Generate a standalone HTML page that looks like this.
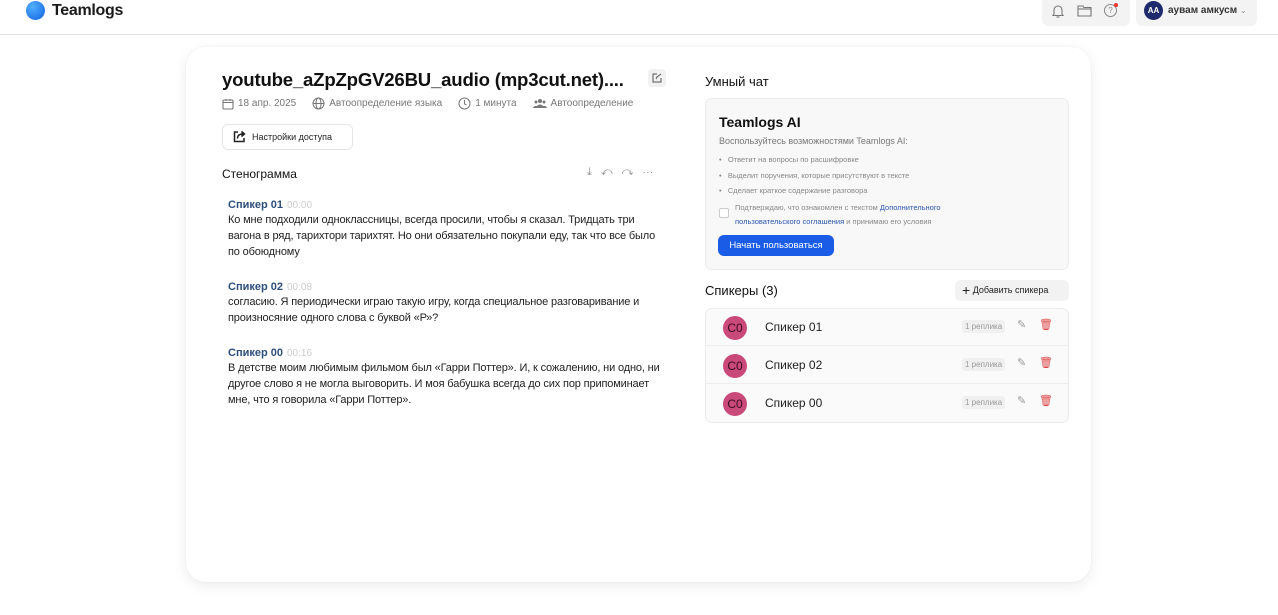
<!DOCTYPE html>
<html><head><meta charset="utf-8"><style>
*{box-sizing:border-box;margin:0;padding:0}
body{width:1278px;height:615px;background:#fff;font-family:"Liberation Sans",sans-serif;color:#1a1a1a;position:relative;overflow:hidden}
.abs{position:absolute}
.hdr{position:absolute;left:0;top:0;width:1278px;height:35px;border-bottom:1px solid #e6e6e8;background:#fff}
.card{position:absolute;left:186px;top:47px;width:905px;height:535px;background:#fff;border-radius:20px;box-shadow:0 4px 14px rgba(0,0,0,0.08),0 0 2px rgba(0,0,0,0.05)}
.meta{font-size:10px;color:#777;display:flex;align-items:center;gap:4px}
.sp{font-size:11px;font-weight:bold;color:#2d4f7c}
.tm{font-size:10px;color:#ccc;margin-left:4px;font-weight:normal}
.txt{font-size:11px;line-height:16px;color:#222;width:440px;letter-spacing:-0.15px}
.srow{position:absolute;left:706px;width:362px;height:38px;border-bottom:1px solid #eee}
.av{position:absolute;left:17px;top:8px;width:24px;height:24px;border-radius:50%;background:#c9497a;color:#3a0a1e;font-size:12px;text-align:center;line-height:24px}
.nm{position:absolute;left:59px;top:12px;font-size:12px;color:#222}
.rep{position:absolute;left:256px;top:12px;font-size:8px;color:#999;background:#f0f0f0;padding:2px 3px;border-radius:3px}
</style></head><body>
<div class="hdr">
 <div class="abs" style="left:26px;top:1px;width:19px;height:19px;border-radius:50%;background:radial-gradient(circle at 35% 30%,#4fb0ff,#1460e0)"></div>
 <div class="abs" style="left:52px;top:2px;font-size:16px;font-weight:bold;letter-spacing:-0.3px">Teamlogs</div>
 <div class="abs" style="left:1042px;top:0;width:88px;height:26px;background:#f3f3f4;border-radius:0 0 6px 6px"></div>
 <svg class="abs" style="left:1051px;top:4px" width="14" height="15" viewBox="0 0 14 15" fill="none" stroke="#777" stroke-width="1.1"><path d="M3 10V6a4 4 0 018 0v4l1 1.5H2z"/><path d="M5.5 13h3"/></svg>
 <svg class="abs" style="left:1077px;top:4px" width="15" height="13" viewBox="0 0 15 13" fill="none" stroke="#777" stroke-width="1.1"><path d="M1 2h5l1 1.5h7V12H1z"/><path d="M1 5h13"/></svg>
 <div class="abs" style="left:1104px;top:4px;width:13px;height:13px;border:1px solid #888;border-radius:50%;font-size:8px;color:#888;text-align:center;line-height:11px">?</div>
 <div class="abs" style="left:1114px;top:3px;width:4px;height:4px;border-radius:50%;background:#e33"></div>
 <div class="abs" style="left:1136px;top:0;width:121px;height:26px;background:#f3f3f4;border-radius:0 0 6px 6px"></div>
 <div class="abs" style="left:1144px;top:1px;width:19px;height:19px;border-radius:50%;background:#1e2a6b;color:#fff;font-size:8px;font-weight:bold;text-align:center;line-height:19px">AA</div>
 <div class="abs" style="left:1168px;top:5px;font-size:10px;font-weight:bold;color:#333">аувам амкусм <span style="font-weight:normal;color:#888;font-size:8px">⌄</span></div>
</div>
<div class="card"></div>
<div class="abs" style="left:222px;top:69px;font-size:18.6px;font-weight:bold;color:#111;letter-spacing:-0.2px">youtube_aZpZpGV26BU_audio (mp3cut.net)....</div>
<div class="abs" style="left:648px;top:69px;width:18px;height:18px;background:#f1f1f2;border-radius:4px"></div>
<svg class="abs" style="left:652px;top:73px" width="10" height="10" viewBox="0 0 10 10" fill="none" stroke="#555" stroke-width="1"><path d="M5 1H1v8h8V5"/><path d="M4 6l1-2 4-3"/></svg>
<div class="abs meta" style="left:222px;top:97px">
 <svg width="12" height="12" viewBox="0 0 12 12" fill="none" stroke="#777" stroke-width="1.1"><rect x="1" y="2" width="10" height="9" rx="1"/><path d="M1 4.5h10M4 1v2M8 1v2"/></svg><span>18 апр. 2025</span>
 <svg style="margin-left:12px" width="13" height="13" viewBox="0 0 13 13" fill="none" stroke="#777" stroke-width="1"><circle cx="6.5" cy="6.5" r="5.5"/><ellipse cx="6.5" cy="6.5" rx="2.5" ry="5.5"/><path d="M1 6.5h11"/></svg><span>Автоопределение языка</span>
 <svg style="margin-left:12px" width="13" height="13" viewBox="0 0 13 13" fill="none" stroke="#777" stroke-width="1"><circle cx="6.5" cy="6.5" r="5.5"/><path d="M6.5 3v4l2 1"/></svg><span>1 минута</span>
 <svg style="margin-left:12px" width="14" height="12" viewBox="0 0 14 12" fill="#777"><circle cx="7" cy="3" r="2"/><circle cx="3" cy="4" r="1.5"/><circle cx="11" cy="4" r="1.5"/><path d="M3.5 10a3.5 3.5 0 017 0z"/><path d="M0 10a3 2.5 0 014-2v2zM14 10a3 2.5 0 00-4-2v2z"/></svg><span>Автоопределение</span>
</div>
<div class="abs" style="left:222px;top:124px;width:131px;height:26px;border:1px solid #e5e5e7;border-radius:6px;font-size:9px;color:#222;padding:7px 0 0 29px">Настройки доступа</div>
<svg class="abs" style="left:233px;top:130px" width="13" height="13" viewBox="0 0 13 13" fill="none" stroke="#222" stroke-width="1.5"><path d="M5 2H1.5v9.5H11V8"/><path d="M4.5 8.5c0-3 2-4.5 5-4.5" /><path d="M8.5 1.5l3 2.5-3 2.5" fill="#222"/></svg>
<div class="abs" style="left:222px;top:167px;font-size:12px;color:#111">Стенограмма</div>
<div class="abs" style="left:587px;top:166px;font-size:11px;color:#888;letter-spacing:9px">⤓↶↷⋯</div>
<div class="abs" style="left:228px;top:199px"><div class="sp">Спикер 01<span class="tm">00:00</span></div><div class="txt" style="margin-top:1px">Ко мне подходили одноклассницы, всегда просили, чтобы я сказал. Тридцать три вагона в ряд, тарихтори тарихтят. Но они обязательно покупали еду, так что все было по обоюдному</div></div>
<div class="abs" style="left:228px;top:281px"><div class="sp">Спикер 02<span class="tm">00:08</span></div><div class="txt" style="margin-top:1px">согласию. Я периодически играю такую игру, когда специальное разговаривание и произносяние одного слова с буквой «Р»?</div></div>
<div class="abs" style="left:228px;top:347px"><div class="sp">Спикер 00<span class="tm">00:16</span></div><div class="txt" style="margin-top:1px">В детстве моим любимым фильмом был «Гарри Поттер». И, к сожалению, ни одно, ни другое слово я не могла выговорить. И моя бабушка всегда до сих пор припоминает мне, что я говорила «Гарри Поттер».</div></div>

<div class="abs" style="left:705px;top:74px;font-size:13px;color:#111">Умный чат</div>
<div class="abs" style="left:705px;top:98px;width:364px;height:172px;background:#f8f8f9;border:1px solid #ececee;border-radius:7px"></div>
<div class="abs" style="left:719px;top:114px;font-size:14px;font-weight:bold;color:#111">Teamlogs AI</div>
<div class="abs" style="left:719px;top:136px;font-size:9px;color:#777">Воспользуйтесь возможностями Teamlogs AI:</div>
<div class="abs" style="left:719px;top:152px;font-size:7.5px;color:#888;line-height:15.5px">•&nbsp;&nbsp;&nbsp;Ответит на вопросы по расшифровке<br>•&nbsp;&nbsp;&nbsp;Выделит поручения, которые присутствуют в тексте<br>•&nbsp;&nbsp;&nbsp;Сделает краткое содержание разговора</div>
<div class="abs" style="left:719px;top:208px;width:10px;height:10px;border:1px solid #ccc;border-radius:2px;background:#fff"></div>
<div class="abs" style="left:735px;top:201px;font-size:7.5px;color:#888;line-height:14px">Подтверждаю, что ознакомлен с текстом <span style="color:#2a55b0">Дополнительного</span><br><span style="color:#2a55b0">пользовательского соглашения</span> и принимаю его условия</div>
<div class="abs" style="left:718px;top:235px;width:116px;height:21px;background:#1a5ce6;border-radius:6px;color:#fff;font-size:9.5px;text-align:center;line-height:21px">Начать пользоваться</div>

<div class="abs" style="left:705px;top:283px;font-size:13px;color:#111">Спикеры (3)</div>
<div class="abs" style="left:955px;top:280px;width:114px;height:21px;background:#f2f2f3;border-radius:6px;font-size:9px;color:#222;line-height:21px;padding-left:7px"><span style="font-size:14px;vertical-align:-2px">+</span> Добавить спикера</div>
<div class="abs" style="left:705px;top:308px;width:364px;height:115px;border:1px solid #ececee;border-radius:7px;background:#fafafa"></div>
<div class="srow" style="top:308px"><div class="av">C0</div><div class="nm">Спикер 01</div><div class="rep">1 реплика</div><span class="abs" style="left:311px;top:10px;font-size:11px;color:#999">✎</span><span class="abs" style="left:333px;top:10px;font-size:11px;color:#d44">🗑</span></div>
<div class="srow" style="top:346px"><div class="av">C0</div><div class="nm">Спикер 02</div><div class="rep">1 реплика</div><span class="abs" style="left:311px;top:10px;font-size:11px;color:#999">✎</span><span class="abs" style="left:333px;top:10px;font-size:11px;color:#d44">🗑</span></div>
<div class="srow" style="top:384px;border-bottom:none"><div class="av">C0</div><div class="nm">Спикер 00</div><div class="rep">1 реплика</div><span class="abs" style="left:311px;top:10px;font-size:11px;color:#999">✎</span><span class="abs" style="left:333px;top:10px;font-size:11px;color:#d44">🗑</span></div>
</body></html>
